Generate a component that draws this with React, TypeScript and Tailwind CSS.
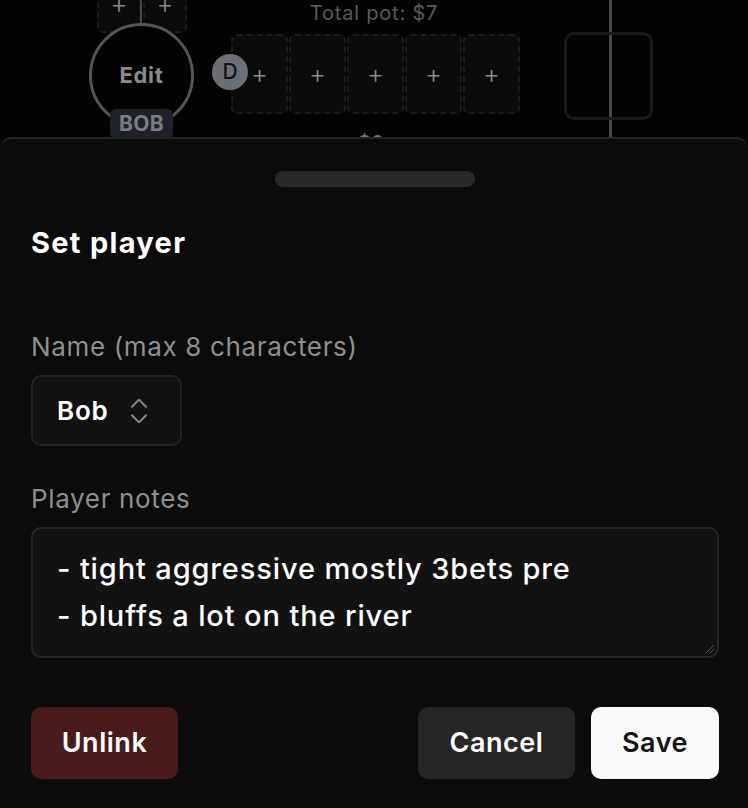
import React from "react";
import { ChevronsUpDown } from "lucide-react";

function CardSlot({ className = "" }: { className?: string }) {
  return (
    <div
      className={`flex items-center justify-center rounded-[6px] border-2 border-dashed border-[#1c1c1c] bg-[#0a0a0a] text-[#8a8a8a] ${className}`}
    >
      <span className="text-[26px] font-light leading-none">+</span>
    </div>
  );
}

export default function App() {
  return (
    <div
      className="relative h-[808px] w-[748px] overflow-hidden bg-[#030303]"
      style={{ fontFamily: "Inter, 'Noto Sans', sans-serif" }}
    >
      {/* Table background */}
      <div className="relative h-[137px]">
        {/* vertical table line */}
        <div className="absolute left-[609px] top-0 h-[137px] w-[3px] bg-[#4a4a4a]" />
        {/* total pot */}
        <div className="absolute left-0 top-0 w-[748px] text-center text-[20px] leading-[26px] tracking-[0.04em] text-[#5a5a5a]">
          Total pot: $7
        </div>
        {/* small top cards */}
        <div className="absolute left-[97px] top-[-20px] flex gap-[2px]">
          <CardSlot className="h-[53px] w-[44px] items-end pb-[14px]" />
          <CardSlot className="h-[53px] w-[44px] items-end pb-[14px]" />
        </div>
        <div className="absolute left-[140px] top-0 h-[24px] w-[2px] bg-[#4a4a4a]" />
        {/* player circle */}
        <div className="absolute left-[89px] top-[23px] flex h-[105px] w-[105px] items-center justify-center rounded-full border-[3px] border-[#555555] bg-[#030303]">
          <span className="text-[22px] font-bold tracking-[0.03em] text-[#8a8a8a]">Edit</span>
        </div>
        <div className="absolute left-[110px] top-[109px] flex h-[30px] w-[63px] items-center justify-center rounded-[6px] bg-[#1e2129]">
          <span className="text-[21px] font-bold tracking-[0.02em] text-[#7a7d84]">BOB</span>
        </div>
        {/* dealer button */}
        <div className="absolute left-[212px] top-[54px] z-10 flex h-[36px] w-[36px] items-center justify-center rounded-full bg-[#6b6f77]">
          <span className="text-[21px] font-medium text-[#111]">D</span>
        </div>
        {/* board cards */}
        <div className="absolute left-[231px] top-[34px] flex gap-[1px]">
          <CardSlot className="h-[80px] w-[57px]" />
          <CardSlot className="h-[80px] w-[57px]" />
          <CardSlot className="h-[80px] w-[57px]" />
          <CardSlot className="h-[80px] w-[57px]" />
          <CardSlot className="h-[80px] w-[57px]" />
        </div>
        {/* bet */}
        <div className="absolute left-[358px] top-[128px] flex items-center gap-[4px] text-[20px] font-medium text-[#777]">
          <span>$0</span>
        </div>
        {/* empty seat */}
        <div className="absolute left-[564px] top-[32px] h-[88px] w-[89px] rounded-[10px] border-[3px] border-[#1a1a1a]" />
      </div>

      {/* Bottom sheet */}
      <div className="relative z-20 h-[700px] rounded-t-[12px] border-t-2 border-[#262626] bg-[#0b0b0b] pl-[31px] pr-[29px]">
        <div className="mx-auto mt-[32px] h-[16px] w-[200px] rounded-full bg-[#292929]" />
        <h2 className="mt-[38px] text-[29px] font-bold leading-[36px] tracking-[0.045em] text-white">
          Set player
        </h2>

        <div className="mt-[70px] text-[26px] leading-[32px] tracking-[0.025em] text-[#8f8f8f]">
          Name (max 8 characters)
        </div>
        <div className="mt-[12px] flex h-[71px] w-[151px] items-center gap-[13px] rounded-[10px] border-2 border-[#232323] bg-[#121212] pl-[24px]">
          <span className="text-[26px] font-semibold tracking-[0.03em] text-white">Bob</span>
          <ChevronsUpDown size={34} strokeWidth={1.35} color="#8a8a8a" />
        </div>

        <div className="mt-[37px] text-[26px] leading-[32px] tracking-[0.025em] text-[#8f8f8f]">
          Player notes
        </div>
        <div className="relative mt-[12px] h-[131px] rounded-[10px] border-2 border-[#262626] bg-[#121212] pl-[24px] pt-[16px] text-[29px] font-medium leading-[47px] tracking-[0.03em] text-white">
          <div>- tight aggressive mostly 3bets pre</div>
          <div>- bluffs a lot on the river</div>
          <svg
            className="absolute bottom-[2px] right-[2px]"
            width="12"
            height="12"
            viewBox="0 0 12 12"
          >
            <line x1="11" y1="3" x2="3" y2="11" stroke="#555" strokeWidth="1" />
            <line x1="11" y1="7" x2="7" y2="11" stroke="#555" strokeWidth="1" />
          </svg>
        </div>

        <div className="mt-[49px] flex items-center">
          <button className="h-[72px] w-[147px] rounded-[10px] bg-[#4b1a1a] text-[27px] font-semibold tracking-[0.02em] text-white">
            Unlink
          </button>
          <div className="flex-1" />
          <button className="h-[72px] w-[157px] rounded-[10px] bg-[#262626] text-[27px] font-semibold tracking-[0.02em] text-white">
            Cancel
          </button>
          <button className="ml-[16px] h-[72px] w-[128px] rounded-[10px] bg-[#fafafa] text-[27px] font-semibold tracking-[0.02em] text-[#141414]">
            Save
          </button>
        </div>
      </div>
    </div>
  );
}
